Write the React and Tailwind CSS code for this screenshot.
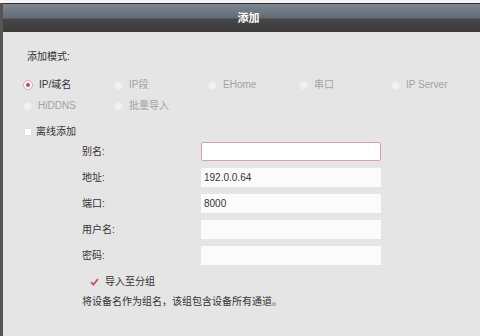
import React from 'react';

const font = { fontFamily: '"Liberation Sans", "Noto Sans CJK SC", sans-serif' };

const Radio = ({ label, checked, disabled, width }) => (
  <div className={`flex items-center shrink-0 ${width}`}>
    {checked ? (
      <span className="w-[10px] h-[10px] rounded-full bg-white border border-[#e0a4ac] flex items-center justify-center">
        <span className="w-[4px] h-[4px] rounded-full bg-[#d2404f]" />
      </span>
    ) : (
      <span className="w-[9px] h-[9px] rounded-full bg-[#f1f1f1] border border-[#e9e9e9]" />
    )}
    <span className={`ml-[6px] ${disabled ? 'text-[#a3a3a3]' : 'text-[#333]'}`}>{label}</span>
  </div>
);

const Field = ({ label, value, error }) => (
  <div className="flex items-center h-[19px]">
    <span className="w-[119px] ml-[55px] text-[#333]">{label}</span>
    <div
      className={`w-[180px] h-[19px] bg-[#fbfbfb] flex items-center px-[3px] text-[#333] ${
        error ? 'border border-[#d9a2a6] rounded-[2px] bg-white' : ''
      }`}
    >
      {value}
    </div>
  </div>
);

export default function App() {
  return (
    <div className="w-[480px] h-[336px] bg-[#f4f4f4] flex flex-col text-[10px] leading-[16px]" style={font}>
      <div className="h-[3px] shrink-0" />
      <div className="flex-1 flex flex-col border-l-[3px] border-[#555]">
        <div className="h-[29px] shrink-0 border-t border-[#2f3338] bg-[linear-gradient(to_bottom,#7f8791_0%,#626a74_50%,#464646_54%,#3b3b3b_100%)] flex items-center justify-center pl-[14px]">
          <span className="text-white font-bold text-[11px]">添加</span>
        </div>
        <div className="flex-1 bg-[#e5e5e5] pt-[17px] pl-[24px] flex flex-col">
          <div className="text-[#333]">添加模式:</div>
          <div className="flex mt-[12px] h-[16px] -ml-[4px]">
            <Radio label="IP/域名" checked width="w-[91px]" />
            <Radio label="IP段" disabled width="w-[94px]" />
            <Radio label="EHome" disabled width="w-[91px]" />
            <Radio label="串口" disabled width="w-[92px]" />
            <Radio label="IP Server" disabled width="w-[90px]" />
          </div>
          <div className="flex mt-[5px] h-[16px] -ml-[4px]">
            <Radio label="HiDDNS" disabled width="w-[91px]" />
            <Radio label="批量导入" disabled width="w-[94px]" />
          </div>
          <div className="flex items-center mt-[10px] h-[16px] -ml-[3px]">
            <span className="w-[8px] h-[8px] bg-white border border-[#e2e2e2]" />
            <span className="ml-[4px] text-[#333]">离线添加</span>
          </div>
          <div className="flex flex-col gap-[7px] mt-[2px]">
            <Field label="别名:" value="" error />
            <Field label="地址:" value="192.0.0.64" />
            <Field label="端口:" value="8000" />
            <Field label="用户名:" value="" />
            <Field label="密码:" value="" />
          </div>
          <div className="flex items-center h-[16px] mt-[9px] ml-[63px]">
            <svg width="9" height="8" viewBox="0 0 9 8">
              <path d="M1 4.2 L3.4 6.6 L8 1" fill="none" stroke="#c9505d" strokeWidth="1.8" />
            </svg>
            <span className="ml-[6px] text-[#333]">导入至分组</span>
          </div>
          <div className="mt-[4px] ml-[55px] text-[#333]">将设备名作为组名，该组包含设备所有通道。</div>
        </div>
      </div>
    </div>
  );
}
